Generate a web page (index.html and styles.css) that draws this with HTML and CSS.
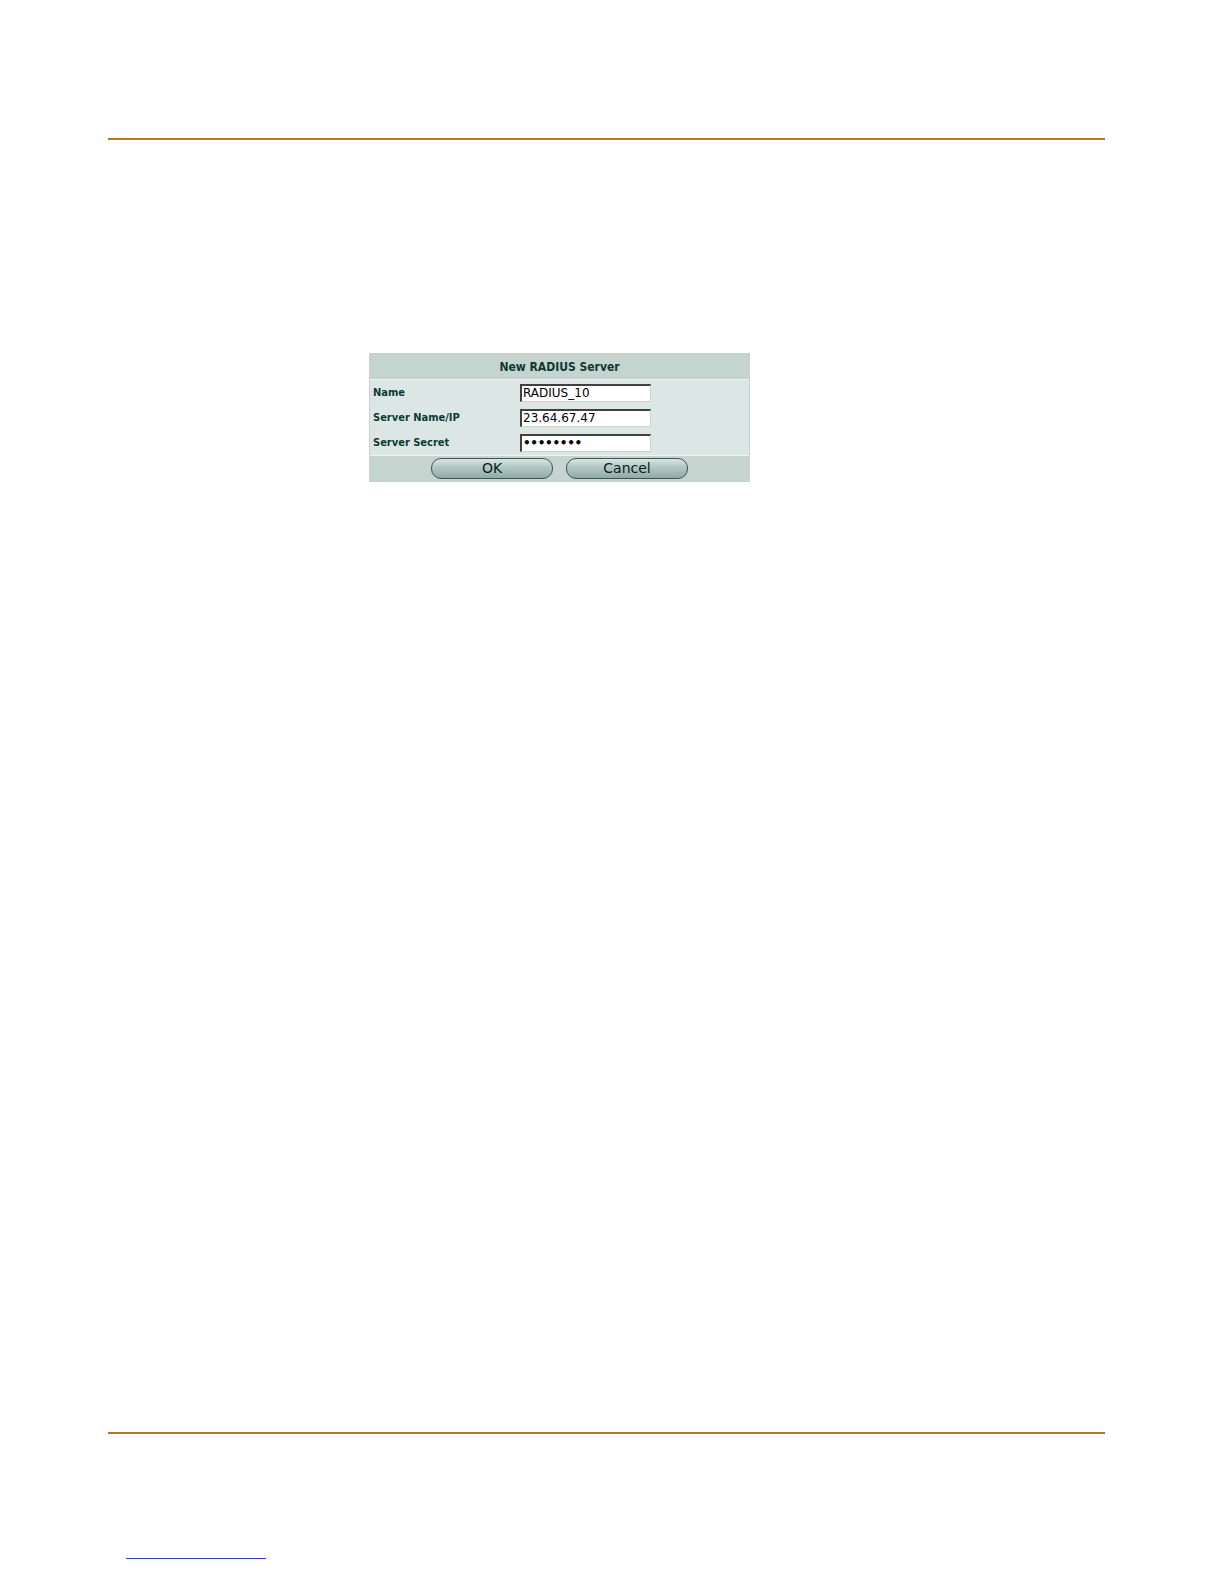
FILE: index.html
```html
<!DOCTYPE html>
<html>
<head>
<meta charset="utf-8">
<title>New RADIUS Server</title>
<link rel="stylesheet" href="styles.css">
</head>
<body>
<div class="page">
  <div class="rule"></div>
  <div class="dialog">
    <div class="dlg-head">New RADIUS Server</div>
    <div class="dlg-body">
      <div class="row">
        <span class="label">Name</span>
        <span class="field">RADIUS_10</span>
      </div>
      <div class="row">
        <span class="label">Server Name/IP</span>
        <span class="field">23.64.67.47</span>
      </div>
      <div class="row">
        <span class="label">Server Secret</span>
        <span class="field pw">••••••••</span>
      </div>
    </div>
    <div class="dlg-foot">
      <span class="btn">OK</span>
      <span class="btn">Cancel</span>
    </div>
  </div>
  <div class="rule bottom"></div>
  <div class="footer"><span class="link"></span></div>
</div>
</body>
</html>
```
FILE: styles.css
```css
html, body {
  margin: 0;
  padding: 0;
  background: #ffffff;
}
.page {
  padding-top: 138px;
  padding-left: 108px;
  width: 997px;
  font-family: "DejaVu Sans", Verdana, sans-serif;
}
.rule {
  height: 2px;
  background: #b27a1c;
}
.rule.bottom {
  margin-top: 950px;
}
.dialog {
  margin-top: 213px;
  margin-left: 261px;
  width: 379px;
  border: 1px solid #c9d1d0;
  background: #dce7e5;
}
.dlg-head {
  height: 25px;
  line-height: 26px;
  background: #c6d4d0;
  border-bottom: 1px solid #eef3f2;
  text-align: center;
  font-family: "DejaVu Sans Condensed", "DejaVu Sans", sans-serif;
  font-size: 12px;
  font-weight: bold;
  color: #0d3a33;
}
.dlg-body {
  display: flex;
  flex-direction: column;
}
.row {
  height: 25px;
  display: flex;
  align-items: center;
}
.label {
  width: 147px;
  padding-left: 3px;
  font-family: "DejaVu Sans Condensed", "DejaVu Sans", sans-serif;
  font-size: 11px;
  font-weight: bold;
  color: #0d3a33;
}
.field {
  box-sizing: border-box;
  width: 131px;
  height: 18px;
  background: #ffffff;
  border-top: 2px solid #404040;
  border-left: 2px solid #404040;
  border-right: 1px solid #d4d0c8;
  border-bottom: 1px solid #d4d0c8;
  font-size: 12px;
  line-height: 15px;
  padding-left: 1px;
  color: #000000;
}
.field.pw {
  font-size: 12px;
  font-weight: bold;
  letter-spacing: -0.3px;
}
.dlg-foot {
  height: 25px;
  border-top: 1px solid #eef3f2;
  background: #c6d4d0;
  display: flex;
  justify-content: center;
  align-items: center;
  gap: 13px;
}
.btn {
  box-sizing: border-box;
  width: 122px;
  height: 21px;
  border: 1px solid #3f5553;
  border-radius: 10px;
  background: linear-gradient(#d9e6e3 0%, #b4c9c5 40%, #8faba6 100%);
  text-align: center;
  font-size: 14px;
  line-height: 19px;
  color: #0b1c1a;
}
.footer {
  padding-top: 124px;
  padding-left: 18px;
}
.link {
  display: block;
  width: 140px;
  border-bottom: 1px solid #2b3fc8;
}
```
